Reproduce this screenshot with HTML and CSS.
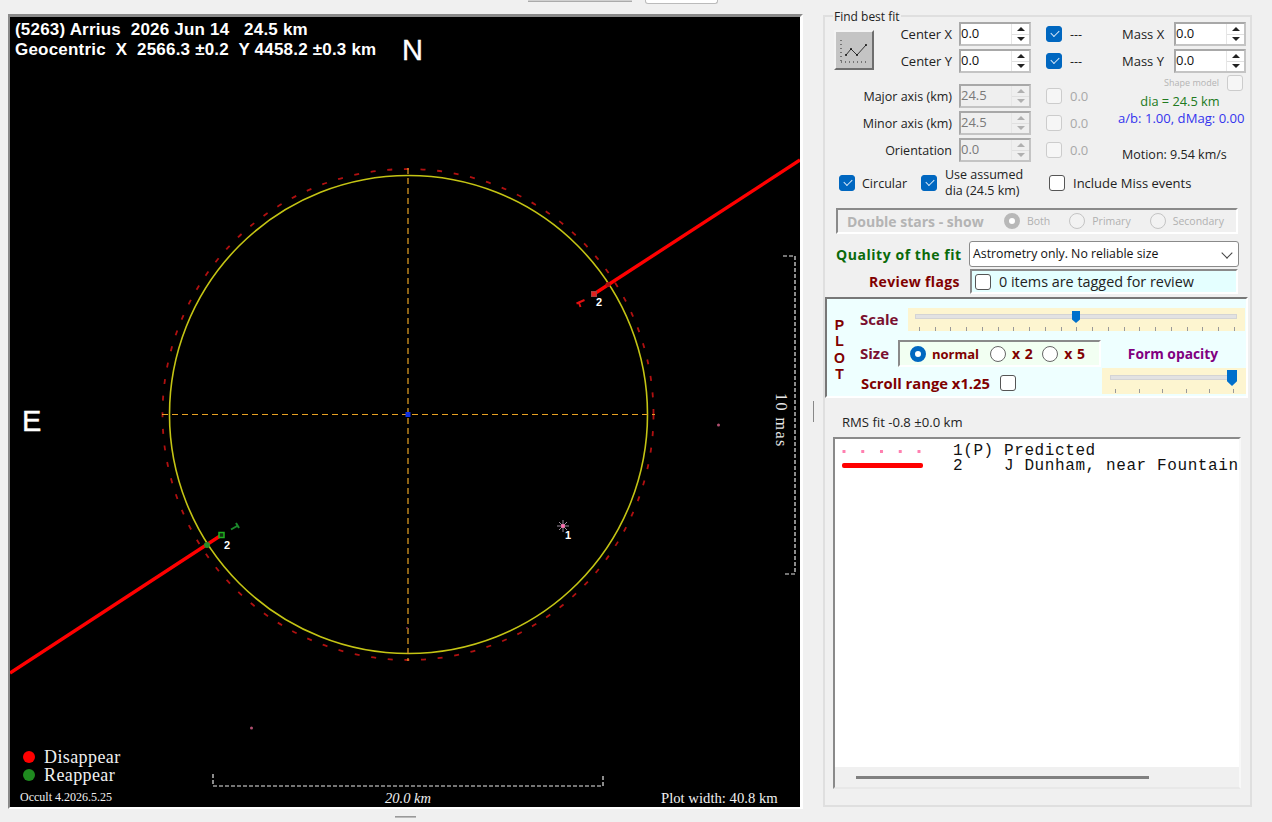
FILE: index.html
```html
<!DOCTYPE html>
<html lang="en">
<head>
    <meta charset="UTF-8">
    <meta name="viewport" content="width=device-width, initial-scale=1.0">
    <title>Asteroid Observations - Plot</title>
    <link rel="stylesheet" href="styles.css">
</head>
<body>
    <div class="top-strip">
        <div class="tab-gray"></div>
        <div class="tab-white"></div>
    </div>

    <div class="main">
        <div class="plot-frame">
            <svg class="plot" viewBox="10 17 790 790" width="790" height="790">
                <!-- scale bars -->
                <path class="scale-bar" d="M213 774V786H603V774"/>
                <path class="scale-bar" d="M783 256H795V574H783"/>

                <!-- predicted limb and fitted ellipse -->
                <circle class="limb-dash" cx="408" cy="414.5" r="245.5"/>
                <circle class="limb" cx="408.5" cy="414.5" r="239"/>
                <path class="cross" d="M162 414.5H655M408 168V661"/>
                <rect x="405.5" y="412" width="5" height="5" fill="#1030e0"/>

                <!-- chords -->
                <path class="chord" d="M800 160L594 294"/>
                <path class="chord" d="M10 673L220 536"/>
                <circle cx="608" cy="284.500" r="2.500" fill="#b01010"/>
                <circle cx="207" cy="545" r="3" fill="#2a8a2a"/>
                <rect x="591.500" y="291.500" width="5" height="5" fill="#e02020" stroke="#a04040"/>
                <rect x="219" y="532.500" width="5" height="5" fill="#103010" stroke="#20b020" stroke-width="1.500"/>
                <path class="tick-red" d="M576.500 303.500L584.500 300M578.500 301.500L580.500 307"/>
                <path class="tick-green" d="M231 529.500L238 525.500M236 523L239 528"/>
                <text class="num" x="596" y="306">2</text>
                <text class="num" x="224" y="549">2</text>

                <!-- predicted event -->
                <path class="star" d="M557 526H569M563 520V532M559 522L567 530M567 522L559 530"/>
                <circle cx="563" cy="526" r="2" fill="#ff70b0"/>
                <text class="num" x="565" y="539">1</text>

                <!-- stray points -->
                <circle cx="718.500" cy="425" r="1.500" fill="#b05070"/>
                <circle cx="251.500" cy="728" r="1.500" fill="#b05070"/>
                <circle cx="407" cy="628" r="1" fill="#803050"/>

                <!-- text -->
                <text class="head" x="15" y="35">(5263) Arrius  2026 Jun 14   24.5 km</text>
                <text class="head" x="15" y="55">Geocentric  X  2566.3 ±0.2  Y 4458.2 ±0.3 km</text>
                <text class="compass" x="402" y="60">N</text>
                <text class="compass" x="22" y="431">E</text>
                <text class="side-label" transform="translate(776 393) rotate(90)">10 mas</text>

                <circle cx="29" cy="757" r="6" fill="#ff0000"/>
                <circle cx="29" cy="775" r="6" fill="#1f8a1f"/>
                <text class="legend" x="44" y="763">Disappear</text>
                <text class="legend" x="44" y="781">Reappear</text>
                <text class="version" x="20" y="801">Occult 4.2026.5.25</text>
                <text class="width-note" x="385" y="803">20.0 km</text>
                <text class="plot-note" x="661" y="803">Plot width: 40.8 km</text>
            </svg>
        </div>

        <div class="splitter"><span class="grip-v"></span></div>

        <div class="side">
            <div class="side-title">Find best fit</div>

            <div class="fit-top">
                <button class="fit-btn" aria-label="Find best fit">
                    <svg viewBox="0 0 36 36" width="36" height="36">
                        <path class="icon-dots" d="M5 8V30M5 30H33"/>
                        <path class="icon-line" d="M10 23L15 17L21 23L30 13"/>
                        <circle cx="10" cy="23" r="1" fill="#111"/>
                        <circle cx="15" cy="17" r="1" fill="#111"/>
                        <circle cx="21" cy="23" r="1" fill="#111"/>
                        <circle cx="30" cy="13" r="1" fill="#111"/>
                    </svg>
                </button>

                <div class="fit-rows">
                    <div class="fit-row">
                        <label class="fit-label big">Center X</label>
                        <div class="spin"><input value="0.0"><span class="arrows"><i class="up"></i><i class="down"></i></span></div>
                        <span class="chk on"></span>
                        <span class="chk-text">---</span>
                    </div>
                    <div class="fit-row">
                        <label class="fit-label big">Center Y</label>
                        <div class="spin"><input value="0.0"><span class="arrows"><i class="up"></i><i class="down"></i></span></div>
                        <span class="chk on"></span>
                        <span class="chk-text">---</span>
                    </div>
                    <div class="fit-row first-axis">
                        <label class="fit-label">Major axis (km)</label>
                        <div class="spin off"><input value="24.5" disabled><span class="arrows"><i class="up"></i><i class="down"></i></span></div>
                        <span class="chk off"></span>
                        <span class="chk-text muted">0.0</span>
                    </div>
                    <div class="fit-row">
                        <label class="fit-label">Minor axis (km)</label>
                        <div class="spin off"><input value="24.5" disabled><span class="arrows"><i class="up"></i><i class="down"></i></span></div>
                        <span class="chk off"></span>
                        <span class="chk-text muted">0.0</span>
                    </div>
                    <div class="fit-row">
                        <label class="fit-label">Orientation</label>
                        <div class="spin off"><input value="0.0" disabled><span class="arrows"><i class="up"></i><i class="down"></i></span></div>
                        <span class="chk off"></span>
                        <span class="chk-text muted">0.0</span>
                    </div>
                </div>

                <div class="mass">
                    <div class="mass-row">
                        <label class="mass-label">Mass X</label>
                        <div class="spin"><input value="0.0"><span class="arrows"><i class="up"></i><i class="down"></i></span></div>
                    </div>
                    <div class="mass-row">
                        <label class="mass-label">Mass Y</label>
                        <div class="spin"><input value="0.0"><span class="arrows"><i class="up"></i><i class="down"></i></span></div>
                    </div>
                    <div class="shape-row">
                        <span class="shape-text">Shape model</span>
                        <span class="chk off"></span>
                    </div>
                    <div class="dia">dia = 24.5 km</div>
                    <div class="ratio">a/b: 1.00, dMag: 0.00</div>
                    <div class="motion">Motion: 9.54 km/s</div>
                </div>
            </div>

            <div class="fit-options">
                <span class="chk on"></span>
                <span class="opt-circular">Circular</span>
                <span class="chk on"></span>
                <span class="opt-assumed">Use assumed<br>dia (24.5 km)</span>
                <span class="chk"></span>
                <span class="opt-miss">Include Miss events</span>
            </div>

            <div class="double-stars">
                <span class="double-title">Double stars - show</span>
                <span class="radio dim-on"></span><span class="dim-text both">Both</span>
                <span class="radio dim"></span><span class="dim-text primary">Primary</span>
                <span class="radio dim"></span><span class="dim-text">Secondary</span>
            </div>

            <div class="quality-row">
                <span class="quality-label">Quality of the fit</span>
                <div class="select">Astrometry only. No reliable size</div>
            </div>

            <div class="review-row">
                <span class="review-label">Review flags</span>
                <div class="review-box">
                    <span class="chk"></span>
                    <span>0 items are tagged for review</span>
                </div>
            </div>

            <div class="plot-panel">
                <div class="plot-word"><span>P</span><span>L</span><span>O</span><span>T</span></div>
                <div class="plot-controls">
                    <div class="scale-row">
                        <span class="ctl-label scale-label">Scale</span>
                        <div class="slider slider-scale">
                            <div class="track"></div>
                            <div class="thumb"></div>
                            <div class="ticks"></div>
                        </div>
                    </div>
                    <div class="size-row">
                        <span class="ctl-label size-label">Size</span>
                        <div class="size-box">
                            <span class="radio on"></span><span class="size-text">normal</span>
                            <span class="radio"></span><span class="size-text times">x 2</span>
                            <span class="radio"></span><span class="size-text times">x 5</span>
                        </div>
                        <span class="opacity-label">Form opacity</span>
                    </div>
                    <div class="scroll-row">
                        <span class="scroll-label">Scroll range x1.25</span>
                        <span class="chk"></span>
                        <div class="slider slider-opacity">
                            <div class="track"></div>
                            <div class="thumb"></div>
                            <div class="ticks"></div>
                        </div>
                    </div>
                </div>
            </div>

            <div class="rms">RMS fit -0.8 ±0.0 km</div>

            <div class="list-box">
                <div class="list-body">
                    <div class="list-row">
                        <span class="swatch dots"></span>
                        <span class="list-num">1(P)</span>
                        <span class="list-name">Predicted</span>
                    </div>
                    <div class="list-row">
                        <span class="swatch bar"></span>
                        <span class="list-num">2</span>
                        <span class="list-name">J Dunham, near Fountain</span>
                    </div>
                </div>
                <div class="list-scroll"><span class="list-thumb"></span></div>
            </div>
        </div>
    </div>

    <div class="bottom-strip"><span class="grip-h"></span></div>
</body>
</html>
```

FILE: styles.css
```css
:root {
    --panel: #f0f0f0;
    --edge: #858585;
    --blue: #0067c0;
    --ui-font: "Open Sans", "Liberation Sans", sans-serif;
    --maroon: #800000;
}

* {
    box-sizing: border-box;
}

body {
    margin: 0;
    width: 1272px;
    height: 822px;
    overflow: hidden;
    background: var(--panel);
    font-family: var(--ui-font);
    font-size: 12.500px;
    color: #222;
}

/* top strip */
.top-strip {
    display: flex;
    height: 14px;
    padding-left: 528px;
}

.tab-gray {
    width: 104px;
    height: 2px;
    background: #d0d0d0;
    border-bottom: 1px solid #aaa;
}

.tab-white {
    width: 73px;
    height: 4px;
    margin-left: 13px;
    background: #fff;
    border: 1px solid #bbb;
    border-top: 0;
    border-radius: 0 0 3px 3px;
}

.main {
    display: flex;
    height: 795px;
    padding-left: 8px;
}

/* plot */
.plot-frame {
    width: 795px;
    height: 795px;
    background: #000;
    border-top: 3px solid #8a8a8a;
    border-left: 2px solid #8a8a8a;
    border-right: 3px solid #fff;
    border-bottom: 2px solid #fff;
}

.plot {
    display: block;
}

.scale-bar {
    fill: none;
    stroke: #e8e8e8;
    stroke-width: 1.2;
    stroke-dasharray: 4 2;
}

.limb-dash {
    fill: none;
    stroke: #b01010;
    stroke-width: 1.8;
    stroke-dasharray: 5 11.700;
}

.limb {
    fill: none;
    stroke: #c4c414;
    stroke-width: 1.6;
}

.cross {
    fill: none;
    stroke: #e8a224;
    stroke-width: 1.2;
    stroke-dasharray: 6 4;
}

.chord {
    fill: none;
    stroke: #f00;
    stroke-width: 3.400;
}

.tick-red {
    fill: none;
    stroke: #e01010;
    stroke-width: 2;
}

.tick-green {
    fill: none;
    stroke: #1c8a2c;
    stroke-width: 2;
}

.star {
    fill: none;
    stroke: #9a8a9a;
    stroke-width: 1;
}

.num {
    font-family: "Liberation Sans", sans-serif;
    font-size: 11px;
    font-weight: bold;
    fill: #fff;
}

.head {
    font-family: "Liberation Sans", sans-serif;
    font-size: 17px;
    font-weight: bold;
    letter-spacing: 0.200px;
    fill: #fff;
    white-space: pre;
}

.compass {
    font-family: "Liberation Sans", sans-serif;
    font-size: 29px;
    fill: #fff;
    stroke: #fff;
    stroke-width: 0.4;
}

.side-label {
    font-family: "Liberation Serif", serif;
    font-size: 16px;
    letter-spacing: 1.500px;
    fill: #e8e8e8;
}

.legend {
    font-family: "Liberation Serif", serif;
    font-size: 18px;
    letter-spacing: 0.400px;
    fill: #f0f0f0;
}

.version {
    font-family: "Liberation Serif", serif;
    font-size: 12px;
    fill: #f0f0f0;
}

.width-note {
    font-family: "Liberation Serif", serif;
    font-size: 14.500px;
    font-style: italic;
    fill: #f0f0f0;
}

.plot-note {
    font-family: "Liberation Serif", serif;
    font-size: 14.700px;
    fill: #f0f0f0;
}

.splitter {
    width: 20px;
    display: flex;
    align-items: center;
    justify-content: center;
}

.grip-v {
    width: 1px;
    height: 21px;
    background: #888;
}

/* side panel */
.side {
    position: relative;
    width: 429px;
    height: 792px;
    margin-top: 1px;
    border: 2px solid #dfdfdf;
}

.side-title {
    position: absolute;
    top: -8px;
    left: 8px;
    padding: 0 1px;
    background: var(--panel);
    font-size: 12px;
    line-height: 16px;
}

.fit-top {
    display: flex;
    margin-left: 9px;
    padding-top: 5px;
}

.fit-btn {
    width: 40px;
    height: 40px;
    margin-top: 8px;
    padding: 0;
    background: #c4c4c4;
    border: 2px solid;
    border-color: #f4f4f4 #6e6e6e #6e6e6e #f4f4f4;
}

.fit-btn svg {
    display: block;
}

.icon-dots {
    fill: none;
    stroke: #222;
    stroke-width: 1;
    stroke-dasharray: 1 3;
}

.icon-line {
    fill: none;
    stroke: #333;
    stroke-width: 1;
}

.fit-rows {
    width: 248px;
    display: flex;
    flex-direction: column;
    gap: 3px;
}

.fit-row {
    display: flex;
    align-items: center;
    height: 24px;
}

.first-axis {
    margin-top: 8px;
}

.fit-label {
    display: flex;
    justify-content: flex-end;
    width: 78px;
    margin-right: 7px;
    white-space: nowrap;
}

.fit-label.big {
    font-size: 13px;
}

.spin {
    display: flex;
    width: 72px;
    height: 24px;
    background: #fff;
    border: 2px solid;
    border-color: #a8a8a8 #c4c4c4 #c4c4c4 #a8a8a8;
}

.spin input {
    width: 50px;
    height: 20px;
    padding: 0 0 3px 0;
    border: 0;
    outline: 0;
    background: transparent;
    font-family: var(--ui-font);
    font-size: 13px;
    color: #111;
}

.spin .arrows {
    display: flex;
    flex-direction: column;
    width: 18px;
    margin-left: auto;
    border-left: 1px solid #e6e6e6;
}

.arrows i {
    flex: 1;
    display: flex;
    align-items: center;
    justify-content: center;
}

.arrows i::after {
    content: "";
    border-left: 4px solid transparent;
    border-right: 4px solid transparent;
}

.up::after {
    border-bottom: 4px solid #222;
}

.down {
    border-top: 1px solid #e0e0e0;
}

.down::after {
    border-top: 4px solid #222;
}

.spin.off {
    background: #efefef;
}

.spin.off input {
    color: #7a7a7a;
}

.spin.off .up::after {
    border-bottom-color: #b0b0b0;
}

.spin.off .down::after {
    border-top-color: #b0b0b0;
}

.chk {
    flex: none;
    display: inline-block;
    width: 16px;
    height: 16px;
    background: #fff;
    border: 1px solid #555;
    border-radius: 3px;
}

.chk.on {
    position: relative;
    background: var(--blue);
    border-color: var(--blue);
}

.chk.on::after {
    content: "";
    position: absolute;
    left: 4px;
    top: 3px;
    width: 7px;
    height: 4px;
    border-left: 1px solid #d8e8f8;
    border-bottom: 1px solid #d8e8f8;
    transform: rotate(-45deg);
}

.chk.off {
    background: #f6f6f6;
    border-color: #ccc;
}

.fit-row .chk {
    margin-left: 15px;
}

.chk-text {
    margin-left: 8px;
}

.muted {
    font-size: 13px;
    color: #a8a8a8;
}

.mass {
    width: 124px;
}

.mass-row {
    display: flex;
    align-items: center;
    height: 24px;
    margin-bottom: 3px;
}

.mass-label {
    width: 52px;
    font-size: 13px;
    white-space: nowrap;
}

.shape-row {
    display: flex;
    align-items: center;
    justify-content: flex-end;
    height: 15px;
    margin-top: -1px;
    padding-right: 3px;
}

.shape-text {
    margin-right: 8px;
    font-size: 9px;
    color: #b4b4b4;
}

.dia {
    margin-top: 3px;
    margin-left: -8px;
    line-height: 16px;
    text-align: center;
    font-size: 12.800px;
    color: #217a21;
}

.ratio {
    margin-left: -4px;
    margin-top: 1px;
    line-height: 16px;
    white-space: nowrap;
    font-size: 13.100px;
    color: #3434ee;
}

.motion {
    margin-top: 21px;
    line-height: 16px;
}

.fit-options {
    display: flex;
    align-items: center;
    height: 32px;
    margin-top: 4px;
    margin-left: 14px;
}

.opt-circular {
    width: 59px;
    margin-left: 7px;
}

.opt-assumed {
    width: 104px;
    margin-left: 8px;
    line-height: 16px;
}

.opt-miss {
    margin-left: 8px;
    font-size: 13px;
}

.double-stars {
    display: flex;
    align-items: center;
    width: 402px;
    height: 26px;
    margin-top: 9px;
    margin-left: 11px;
    padding-left: 9px;
    border: 2px solid;
    border-color: #8a8a8a #fff #fff #8a8a8a;
}

.double-title {
    width: 157px;
    font-weight: bold;
    font-size: 14px;
    white-space: nowrap;
    color: #b4b4b4;
}

.radio {
    flex: none;
    display: inline-block;
    width: 16px;
    height: 16px;
    background: #fff;
    border: 1px solid #666;
    border-radius: 50%;
}

.radio.on {
    border: 5px solid var(--blue);
}

.radio.dim {
    background: #f2f2f2;
    border-color: #c4c4c4;
}

.radio.dim-on {
    background: #fff;
    border: 5px solid #b8b8b8;
}

.dim-text {
    margin-left: 7px;
    font-size: 10.500px;
    color: #b0b0b0;
}

.both {
    margin-right: 19px;
}

.primary {
    margin-right: 19px;
}

.quality-row {
    display: flex;
    align-items: center;
    height: 26px;
    margin-top: 7px;
    margin-left: 11px;
}

.quality-label {
    width: 133px;
    font-weight: bold;
    font-size: 14px;
    letter-spacing: 0.550px;
    white-space: nowrap;
    color: #0a6a0a;
}

.select {
    position: relative;
    width: 270px;
    height: 26px;
    padding-left: 3px;
    line-height: 23px;
    font-size: 12.300px;
    background: #fff;
    border: 1px solid #8a8a8a;
    border-radius: 3px;
    color: #111;
}

.select::after {
    content: "";
    position: absolute;
    right: 7px;
    top: 7px;
    width: 7px;
    height: 7px;
    border-right: 1px solid #444;
    border-bottom: 1px solid #444;
    transform: rotate(45deg);
}

.review-row {
    display: flex;
    align-items: center;
    height: 25px;
    margin-top: 2px;
    margin-left: 44px;
}

.review-label {
    width: 101px;
    font-weight: bold;
    font-size: 14px;
    letter-spacing: 0.350px;
    white-space: nowrap;
    color: var(--maroon);
}

.review-box {
    display: flex;
    align-items: center;
    gap: 8px;
    width: 268px;
    height: 25px;
    padding-left: 3px;
    background: #e4ffff;
    border: 2px solid;
    border-color: #8a8a8a #fff #fff #8a8a8a;
    font-size: 14.400px;
}

/* plot settings */
.plot-panel {
    display: flex;
    width: 423px;
    height: 101px;
    margin-top: 3px;
    background: #eeffff;
    border: 2px solid;
    border-color: #777 #fff #fff #777;
}

.plot-word {
    display: flex;
    flex-direction: column;
    width: 33px;
    padding: 18px 8px 0 0;
    text-align: center;
    font-family: "Liberation Sans", sans-serif;
    font-weight: bold;
    font-size: 14px;
    line-height: 16.300px;
    color: var(--maroon);
}

.plot-controls {
    width: 386px;
}

.ctl-label {
    font-weight: bold;
    font-size: 15px;
    color: #7a1030;
}

.scale-row {
    display: flex;
    align-items: center;
    height: 23px;
    margin-top: 9px;
}

.scale-label {
    width: 48px;
    margin-top: -2px;
}

.slider {
    position: relative;
    background: #fdf5d0;
}

.slider-scale {
    width: 337px;
    height: 23px;
}

.slider-opacity {
    width: 144px;
    height: 26px;
    margin-left: auto;
}

.track {
    position: absolute;
    height: 5px;
    background: #e2e2e2;
    border: 1px solid #d4d4d4;
}

.ticks {
    position: absolute;
    height: 4px;
    background: repeating-linear-gradient(90deg, #999 0 1px, transparent 1px var(--step));
}

.thumb {
    position: absolute;
    background: #0070cc;
    clip-path: polygon(0 0, 100% 0, 100% 70%, 50% 100%, 0 70%);
}

.slider-scale .track {
    left: 7px;
    right: 8px;
    top: 6px;
}

.slider-scale .ticks {
    --step: 15.750px;
    left: 11px;
    right: 10px;
    top: 19px;
}

.slider-scale .thumb {
    left: 164px;
    top: 3px;
    width: 8px;
    height: 12px;
}

.slider-opacity .track {
    left: 8px;
    right: 9px;
    top: 7px;
}

.slider-opacity .ticks {
    --step: 23.500px;
    left: 13px;
    right: 11px;
    top: 21px;
}

.slider-opacity .thumb {
    left: 125px;
    top: 2px;
    width: 10px;
    height: 16px;
}

.size-row {
    display: flex;
    align-items: center;
    height: 27px;
    margin-top: 9px;
}

.size-label {
    width: 38px;
    margin-top: -2px;
}

.size-box {
    display: flex;
    align-items: center;
    width: 203px;
    height: 27px;
    padding-left: 10px;
    background: #f2fff2;
    border: 2px solid;
    border-color: #8a8a8a #fff #fff #8a8a8a;
}

.size-text {
    margin: 0 11px 0 6px;
    font-weight: bold;
    font-size: 13px;
    color: var(--maroon);
}

.size-text.times {
    font-size: 14px;
    letter-spacing: 0.500px;
    white-space: nowrap;
    margin-right: 9px;
}

.opacity-label {
    width: 144px;
    text-align: center;
    font-weight: bold;
    font-size: 13.800px;
    white-space: nowrap;
    color: #800080;
}

.scroll-row {
    display: flex;
    align-items: center;
    height: 26px;
    margin-top: 1px;
}

.scroll-label {
    width: 140px;
    margin-top: 3px;
    padding-left: 1px;
    white-space: nowrap;
    font-weight: bold;
    font-size: 14.800px;
    color: var(--maroon);
}

.scroll-row .chk {
    margin-top: 3px;
}

/* list of observers */
.rms {
    margin-top: 17px;
    margin-left: 17px;
    font-size: 13.100px;
    line-height: 14px;
}

.list-box {
    display: flex;
    flex-direction: column;
    width: 408px;
    height: 352px;
    margin-top: 8px;
    margin-left: 8px;
    overflow: hidden;
    border: 2px solid;
    border-color: #8a8a8a #f8f8f8 #e8e8e8 #8a8a8a;
}

.list-body {
    flex: 1;
    padding-top: 5px;
    background: #fff;
}

.list-row {
    display: flex;
    align-items: center;
    height: 15px;
    font-family: "Liberation Mono", monospace;
    font-size: 16px;
    line-height: 15px;
    letter-spacing: 0.600px;
    white-space: nowrap;
    color: #111;
}

.swatch {
    width: 81px;
    margin-left: 7px;
}

.dots {
    height: 5px;
    background: radial-gradient(circle, #ff80b0 1.500px, transparent 2px) -7.400px 0 / 18.750px 5px;
}

.bar {
    height: 5px;
    margin-top: -2px;
    background: #f00;
    border-radius: 2px;
}

.list-num {
    width: 51px;
    margin-left: 30px;
}

.list-scroll {
    display: flex;
    align-items: center;
    height: 20px;
    padding-left: 21px;
    background: var(--panel);
}

.list-thumb {
    width: 293px;
    height: 3px;
    background: #808080;
}

.bottom-strip {
    display: flex;
    justify-content: center;
    width: 795px;
    margin-left: 8px;
    padding-top: 7px;
}

.grip-h {
    width: 21px;
    height: 1px;
    background: #999;
    box-shadow: 0 1px 0 #bbb;
}
```
